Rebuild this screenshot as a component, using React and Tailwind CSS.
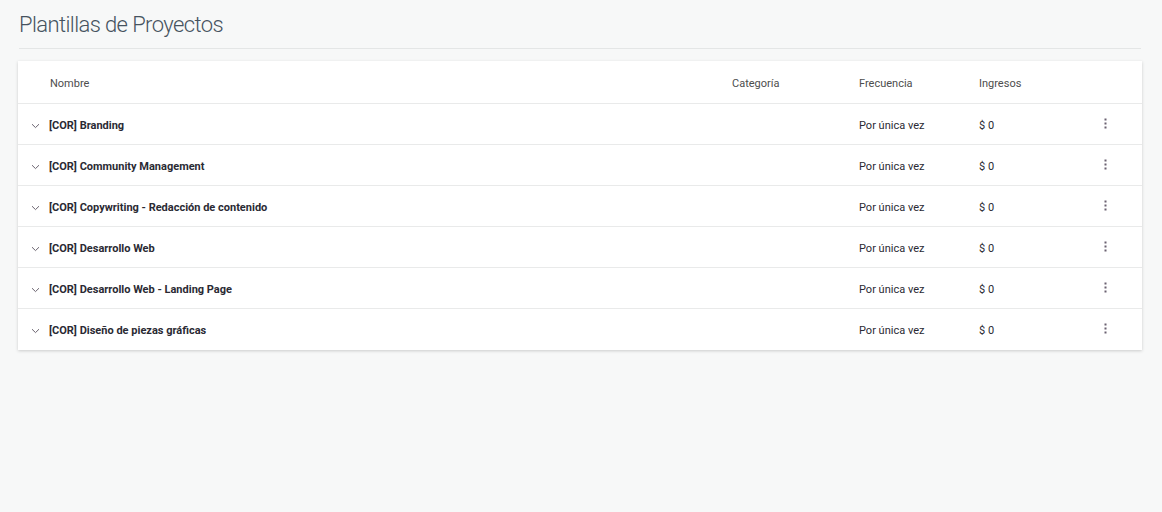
import React from "react";

const rows = [
  "[COR] Branding",
  "[COR] Community Management",
  "[COR] Copywriting - Redacción de contenido",
  "[COR] Desarrollo Web",
  "[COR] Desarrollo Web - Landing Page",
  "[COR] Diseño de piezas gráficas",
];

function Chevron() {
  return (
    <svg width="9" height="6" viewBox="0 0 9 6" className="block">
      <path d="M1 1.2 L4.5 4.6 L8 1.2" fill="none" stroke="#6b6470" strokeWidth="1" />
    </svg>
  );
}

function Dots() {
  return (
    <svg width="3" height="11" viewBox="0 0 3 11" className="block">
      <rect x="0.5" y="0.5" width="2" height="2" fill="#6a6170" />
      <rect x="0.5" y="4.5" width="2" height="2" fill="#6a6170" />
      <rect x="0.5" y="8.5" width="2" height="2" fill="#6a6170" />
    </svg>
  );
}

export default function App() {
  return (
    <div
      className="min-h-[512px] w-full bg-[#f7f8f8] px-[19px] pt-[10px]"
      style={{ fontFamily: "Roboto, 'Liberation Sans', sans-serif" }}
    >
      <h1 className="text-[22px] font-light text-[#46535f] leading-[30px] tracking-[-0.6px]">
        Plantillas de Proyectos
      </h1>
      <div className="mt-[8px] mr-[2px] h-px bg-[#e4e6e6]" />
      <div className="mt-[12px] -ml-px mr-px bg-white shadow-[0_1px_3px_rgba(0,0,0,0.18)]">
        <div className="flex h-[43px] items-center border-b border-[#e9eaea] pt-[4px] text-[11px] text-[#4d4d4d]">
          <div className="w-[714px] pl-[32px]">Nombre</div>
          <div className="w-[127px]">Categoría</div>
          <div className="w-[120px]">Frecuencia</div>
          <div className="flex-1">Ingresos</div>
        </div>
        {rows.map((r, i) => (
          <div
            key={r}
            className={`flex h-[41px] items-center border-b pt-[5px] text-[11px] text-[#2a2a33] ${
              i < rows.length - 1 ? "border-[#e9eaea]" : "border-transparent"
            }`}
          >
            <div className="flex w-[714px] items-center">
              <div className="w-[31px] pl-[13px] pb-px">
                <Chevron />
              </div>
              <span className="font-bold">{r}</span>
            </div>
            <div className="w-[127px]" />
            <div className="w-[120px]">Por única vez</div>
            <div className="w-[125px]">$ 0</div>
            <div className="pb-[6px]">
              <Dots />
            </div>
          </div>
        ))}
      </div>
    </div>
  );
}
